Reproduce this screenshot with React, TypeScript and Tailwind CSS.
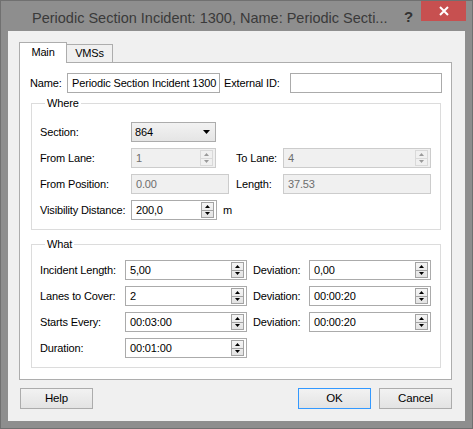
import React from 'react';

const Arrow = ({ up, color }: { up?: boolean; color: string }) => (
  <svg width="5" height="3" viewBox="0 0 5 3">
    <path d={up ? 'M2.5 0L5 3H0Z' : 'M0 0H5L2.5 3Z'} fill={color} />
  </svg>
);

const SpinArrows = ({ disabled }: { disabled?: boolean }) => (
  <div
    className={`flex flex-col w-[13px] h-[16px] border ${
      disabled ? 'border-[#d9d9d9] bg-[#f0f0f0]' : 'border-[#a3a3a3] bg-gradient-to-b from-[#f5f5f5] to-[#e3e3e3]'
    }`}
  >
    <div className={`flex-1 flex items-center justify-center border-b ${disabled ? 'border-[#d9d9d9]' : 'border-[#a3a3a3]'}`}>
      <Arrow up color={disabled ? '#9a9a9a' : '#000'} />
    </div>
    <div className="flex-1 flex items-center justify-center">
      <Arrow color={disabled ? '#9a9a9a' : '#000'} />
    </div>
  </div>
);

const SpinBox = ({ value, className, disabled }: { value: string; className: string; disabled?: boolean }) => (
  <div
    className={`shrink-0 flex items-center justify-between h-[20px] border pl-[4px] pr-[2px] ${
      disabled ? 'border-[#cccccc] bg-[#f0f0f0] text-[#6d6d6d]' : 'border-[#ababab] bg-white text-black'
    } ${className}`}
  >
    <span>{value}</span>
    <SpinArrows disabled={disabled} />
  </div>
);

const TextBox = ({ value, className, disabled }: { value: string; className: string; disabled?: boolean }) => (
  <div
    className={`shrink-0 flex items-center h-[20px] border pl-[4px] whitespace-nowrap overflow-hidden ${
      disabled ? 'border-[#cccccc] bg-[#f0f0f0] text-[#6d6d6d]' : 'border-[#ababab] bg-white text-black'
    } ${className}`}
  >
    {value}
  </div>
);

const Btn = ({ label, def }: { label: string; def?: boolean }) => (
  <button
    className={`w-[73px] h-[21px] flex items-center justify-center border bg-gradient-to-b from-[#f2f2f2] to-[#e3e3e3] text-black text-[11.5px] ${
      def ? 'border-[#3399ff]' : 'border-[#acacac]'
    }`}
  >
    {label}
  </button>
);

export default function App() {
  return (
    <div className="w-[473px] h-[429px] bg-[#8e8e8e] border border-[#707070] flex flex-col font-['Liberation_Sans',Arial,sans-serif] text-[11px] tracking-[-0.15px] text-black whitespace-nowrap">
      {/* title bar */}
      <div className="h-[30px] flex items-start">
        <div className="flex-1 pl-[31px] pt-[7px] text-[14.5px] tracking-[0px] text-[#3a3a3a]">
          Periodic Section Incident: 1300, Name: Periodic Secti...
        </div>
        <div className="pt-[5px] mr-[8px] text-[15px] font-bold text-[#333333]">?</div>
        <div className="w-[45px] h-[20px] bg-[#c75050] flex items-center justify-center mr-[6px]">
          <svg width="10" height="10" viewBox="0 0 10 10">
            <path d="M1 1L9 9M9 1L1 9" stroke="#fff" strokeWidth="2" />
          </svg>
        </div>
      </div>

      {/* client */}
      <div className="mx-[7px] h-[390px] bg-[#f0f0f0] pt-[11px] pl-[11px] pr-[13px] flex flex-col">
        {/* tabs */}
        <div className="flex items-end h-[20px]">
          <div className="relative z-10 w-[48px] h-[21px] -mb-[1px] bg-white border border-b-0 border-[#adadad] flex items-center justify-center pb-[1px]">
            Main
          </div>
          <div className="w-[46px] h-[18px] bg-[#f0f0f0] border border-l-0 border-b-0 border-[#adadad] flex items-center justify-center">
            VMSs
          </div>
        </div>

        {/* pane */}
        <div className="h-[318px] bg-white border border-[#adadad] pt-[10px] pl-[11px] pr-[10px] flex flex-col">
          <div className="flex items-center h-[20px] -ml-[1px]">
            <span className="w-[37px] shrink-0">Name:</span>
            <TextBox value="Periodic Section Incident 1300" className="w-[153px]" />
            <span className="ml-[4px] w-[66px] shrink-0">External ID:</span>
            <TextBox value="" className="w-[152px]" />
          </div>

          <fieldset className="mt-[3px] border border-[#dcdcdc] pl-[8px] pb-[9px] w-[410px]">
            <legend className="ml-[5px] px-[2px] leading-[14px]">Where</legend>
            <div className="mt-[12px] flex flex-col gap-[6px]">
              <div className="flex items-center h-[20px]">
                <span className="w-[91px] shrink-0">Section:</span>
                <div className="w-[85px] h-[20px] border border-[#acacac] bg-gradient-to-b from-[#f2f2f2] to-[#e5e5e5] flex items-center justify-between pl-[3px] pr-[5px]">
                  <span>864</span>
                  <svg width="7" height="4" viewBox="0 0 7 4">
                    <path d="M0 0H7L3.5 4Z" fill="#000" />
                  </svg>
                </div>
              </div>
              <div className="flex items-center h-[20px]">
                <span className="w-[91px] shrink-0">From Lane:</span>
                <div className="w-[98px] shrink-0">
                  <SpinBox value="1" className="w-[85px]" disabled />
                </div>
                <span className="ml-[7px] w-[47px] shrink-0">To Lane:</span>
                <SpinBox value="4" className="w-[148px]" disabled />
              </div>
              <div className="flex items-center h-[20px]">
                <span className="w-[91px] shrink-0">From Position:</span>
                <TextBox value="0.00" className="w-[98px]" disabled />
                <span className="ml-[7px] w-[47px] shrink-0">Length:</span>
                <TextBox value="37.53" className="w-[148px]" disabled />
              </div>
              <div className="flex items-center h-[20px]">
                <span className="w-[91px] shrink-0">Visibility Distance:</span>
                <SpinBox value="200,0" className="w-[86px]" />
                <span className="ml-[6px]">m</span>
              </div>
            </div>
          </fieldset>

          <fieldset className="mt-[7px] border border-[#dcdcdc] pl-[8px] pb-[9px] w-[410px]">
            <legend className="ml-[5px] px-[2px] leading-[14px]">What</legend>
            <div className="mt-[9px] flex flex-col gap-[6px]">
              <div className="flex items-center h-[20px]">
                <span className="w-[85px] shrink-0">Incident Length:</span>
                <SpinBox value="5,00" className="w-[122px]" />
                <span className="ml-[6px] w-[56px] shrink-0">Deviation:</span>
                <SpinBox value="0,00" className="w-[122px]" />
              </div>
              <div className="flex items-center h-[20px]">
                <span className="w-[85px] shrink-0">Lanes to Cover:</span>
                <SpinBox value="2" className="w-[122px]" />
                <span className="ml-[6px] w-[56px] shrink-0">Deviation:</span>
                <SpinBox value="00:00:20" className="w-[122px]" />
              </div>
              <div className="flex items-center h-[20px]">
                <span className="w-[85px] shrink-0">Starts Every:</span>
                <SpinBox value="00:03:00" className="w-[122px]" />
                <span className="ml-[6px] w-[56px] shrink-0">Deviation:</span>
                <SpinBox value="00:00:20" className="w-[122px]" />
              </div>
              <div className="flex items-center h-[20px]">
                <span className="w-[85px] shrink-0">Duration:</span>
                <SpinBox value="00:01:00" className="w-[122px]" />
              </div>
            </div>
          </fieldset>
        </div>

        {/* buttons */}
        <div className="mt-[8px] flex items-center pl-[1px]">
          <Btn label="Help" />
          <div className="flex-1" />
          <div className="flex gap-[8px]">
            <Btn label="OK" def />
            <Btn label="Cancel" />
          </div>
        </div>
      </div>
    </div>
  );
}
